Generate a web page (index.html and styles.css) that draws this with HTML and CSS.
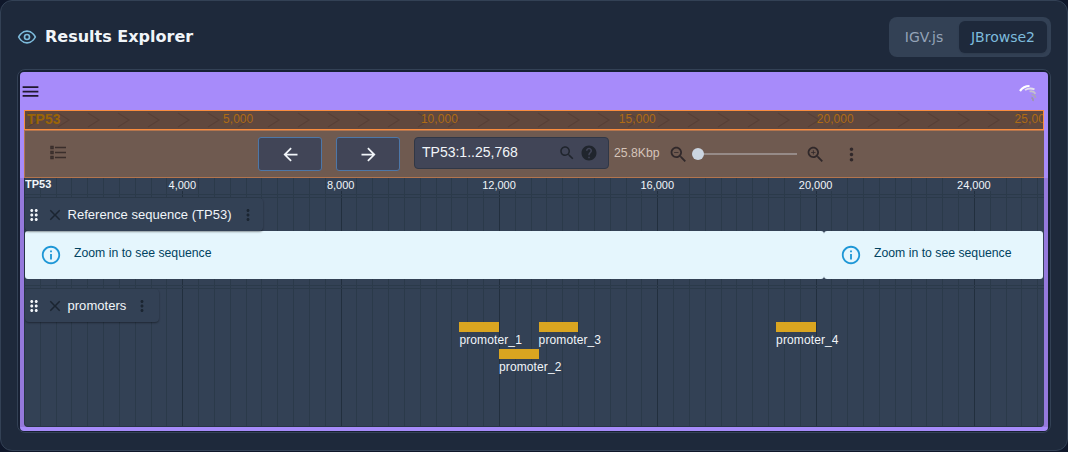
FILE: index.html
```html
<!DOCTYPE html>
<html lang="en">
<head>
    <meta charset="UTF-8">
    <meta name="viewport" content="width=device-width, initial-scale=1.0">
    <title>Results Explorer</title>
    <link rel="stylesheet" href="styles.css">
</head>
<body>
    <!-- shared icons -->
    <svg class="defs" width="0" height="0">
        <symbol id="more" viewBox="0 0 24 24"><path d="M12 8c1.1 0 2-.9 2-2s-.9-2-2-2-2 .9-2 2 .9 2 2 2zm0 2c-1.1 0-2 .9-2 2s.9 2 2 2 2-.9 2-2-.9-2-2-2zm0 6c-1.1 0-2 .9-2 2s.9 2 2 2 2-.9 2-2-.9-2-2-2z"/></symbol>
        <symbol id="drag" viewBox="0 0 24 24"><path d="M11 18c0 1.1-.9 2-2 2s-2-.9-2-2 .9-2 2-2 2 .9 2 2zm-2-8c-1.1 0-2 .9-2 2s.9 2 2 2 2-.9 2-2-.9-2-2-2zm0-6c-1.1 0-2 .9-2 2s.9 2 2 2 2-.9 2-2-.9-2-2-2zm6 4c1.1 0 2-.9 2-2s-.9-2-2-2-2 .9-2 2 .9 2 2 2zm0 2c-1.1 0-2 .9-2 2s.9 2 2 2 2-.9 2-2-.9-2-2-2zm0 6c-1.1 0-2 .9-2 2s.9 2 2 2 2-.9 2-2-.9-2-2-2z"/></symbol>
        <symbol id="close" viewBox="0 0 24 24"><path d="M19 6.41L17.59 5 12 10.59 6.41 5 5 6.41 10.59 12 5 17.59 6.41 19 12 13.41 17.59 19 19 17.59 13.41 12z"/></symbol>
        <symbol id="info" viewBox="0 0 24 24"><path d="M11 7h2v2h-2zm0 4h2v6h-2zm1-9C6.48 2 2 6.48 2 12s4.48 10 10 10 10-4.48 10-10S17.52 2 12 2zm0 18c-4.41 0-8-3.59-8-8s3.59-8 8-8 8 3.59 8 8-3.59 8-8 8z"/></symbol>
    </svg>

    <main class="card">
        <header class="card-header">
            <svg class="eye" viewBox="0 0 24 24"><path d="M2 12s3.500-7 10-7 10 7 10 7-3.500 7-10 7-10-7-10-7z"/><circle cx="12" cy="12" r="3"/></svg>
            <h1>Results Explorer</h1>
            <div class="tabs">
                <button class="tab">IGV.js</button>
                <button class="tab active">JBrowse2</button>
            </div>
        </header>

        <section class="frame">
            <div class="browser">
                <div class="view-header">
                    <svg class="icon menu" viewBox="0 0 24 24"><path d="M3 18h18v-2H3v2zm0-5h18v-2H3v2zm0-7v2h18V6H3z"/></svg>
                    <svg class="logo" viewBox="0 0 18 18">
                        <path d="M1 7Q4.500 2 10.500 2" stroke="#fff" stroke-width="2.200"/>
                        <path d="M6 6Q10.500 3.400 15.500 5.400" stroke="#e4e0ec" stroke-width="1.900"/>
                        <path d="M10.500 7.500Q14.500 6.500 16.500 9.800" stroke="#c5c0cf" stroke-width="1.800"/>
                        <path d="M12.500 10.500Q16 10.500 16.500 14" stroke="#aba6b6" stroke-width="1.600"/>
                        <path d="M12.500 13.500Q14.500 14.500 14 17" stroke="#9c96a8" stroke-width="1.600"/>
                    </svg>
                </div>

                <div class="overview">
                    <svg class="chevrons" width="1018" height="18">
                        <defs><pattern id="chev" x="2" width="30" height="18" patternUnits="userSpaceOnUse"><path d="M1 2l11 7-11 7"/></pattern></defs>
                        <rect width="1018" height="18" fill="url(#chev)"/>
                    </svg>
                    <b>TP53</b>
                    <span>5,000</span><span>10,000</span><span>15,000</span><span>20,000</span><span>25,000</span>
                </div>

                <div class="toolbar">
                    <svg class="tracks-icon" viewBox="0 0 17 16"><path d="M1 1.500h2v2H1zM1 6.500h2v2H1zM1 11.500h2v2H1zM5 2.500h11M5 7.500h11M5 12.500h11"/></svg>
                    <button class="pan"><svg class="icon" viewBox="0 0 24 24"><path d="M20 11H7.830l5.590-5.590L12 4l-8 8 8 8 1.410-1.410L7.830 13H20v-2z"/></svg></button>
                    <button class="pan"><svg class="icon" viewBox="0 0 24 24"><path d="M12 4l-1.410 1.410L16.170 11H4v2h12.170l-5.580 5.590L12 20l8-8z"/></svg></button>
                    <div class="search">
                        <span>TP53:1..25,768</span>
                        <svg class="icon" viewBox="0 0 24 24"><path d="M15.500 14h-.79l-.28-.27C15.410 12.590 16 11.110 16 9.500 16 5.910 13.090 3 9.500 3S3 5.910 3 9.500 5.910 16 9.500 16c1.610 0 3.090-.59 4.230-1.570l.27.28v.79l5 4.990L20.490 19l-4.990-5zm-6 0C7.010 14 5 11.990 5 9.500S7.010 5 9.500 5 14 7.010 14 9.500 11.990 14 9.500 14z"/></svg>
                        <svg class="icon help" viewBox="0 0 24 24"><path d="M12 2C6.480 2 2 6.480 2 12s4.480 10 10 10 10-4.480 10-10S17.520 2 12 2zm1 17h-2v-2h2v2zm2.070-7.750l-.9.92C13.450 12.900 13 13.500 13 15h-2v-.5c0-1.100.45-2.100 1.170-2.830l1.240-1.260c.37-.36.59-.86.59-1.410 0-1.100-.9-2-2-2s-2 .9-2 2H8c0-2.210 1.790-4 4-4s4 1.790 4 4c0 .88-.36 1.680-.93 2.250z"/></svg>
                    </div>
                    <span class="span-size">25.8Kbp</span>
                    <svg class="icon zoom-out" viewBox="0 0 24 24"><path d="M15.500 14h-.79l-.28-.27C15.410 12.590 16 11.110 16 9.500 16 5.910 13.090 3 9.500 3S3 5.910 3 9.500 5.910 16 9.500 16c1.610 0 3.090-.59 4.230-1.570l.27.28v.79l5 4.990L20.490 19l-4.990-5zm-6 0C7.010 14 5 11.990 5 9.500S7.010 5 9.500 5 14 7.010 14 9.500 11.990 14 9.500 14zM7 9h5v1H7z"/></svg>
                    <div class="slider"><i></i></div>
                    <svg class="icon zoom-in" viewBox="0 0 24 24"><path d="M15.500 14h-.79l-.28-.27C15.410 12.590 16 11.110 16 9.500 16 5.910 13.090 3 9.500 3S3 5.910 3 9.500 5.910 16 9.500 16c1.610 0 3.090-.59 4.230-1.570l.27.28v.79l5 4.990L20.490 19l-4.990-5zm-6 0C7.010 14 5 11.990 5 9.500S7.010 5 9.500 5 14 7.010 14 9.500 11.990 14 9.500 14zm2.500-4h-2v2H9v-2H7V9h2V7h1v2h2v1z"/></svg>
                    <svg class="icon view-more"><use href="#more"/></svg>
                </div>

                <div class="tracks">
                    <div class="ruler">
                        <b>TP53</b>
                        <div><span>4,000</span></div>
                        <div><span>8,000</span></div>
                        <div><span>12,000</span></div>
                        <div><span>16,000</span></div>
                        <div><span>20,000</span></div>
                        <div><span>24,000</span></div>
                    </div>

                    <div class="track reference">
                        <div class="track-label">
                            <svg class="drag"><use href="#drag"/></svg>
                            <svg class="close"><use href="#close"/></svg>
                            <span>Reference sequence (TP53)</span>
                            <svg class="more"><use href="#more"/></svg>
                        </div>
                        <div class="blocks">
                            <div class="notice wide"><svg><use href="#info"/></svg><span>Zoom in to see sequence</span></div>
                            <div class="notice"><svg><use href="#info"/></svg><span>Zoom in to see sequence</span></div>
                        </div>
                    </div>

                    <div class="track promoters">
                        <div class="track-label">
                            <svg class="drag"><use href="#drag"/></svg>
                            <svg class="close"><use href="#close"/></svg>
                            <span>promoters</span>
                            <svg class="more"><use href="#more"/></svg>
                        </div>
                        <div class="feature p1">promoter_1</div>
                        <div class="feature p2">promoter_2</div>
                        <div class="feature p3">promoter_3</div>
                        <div class="feature p4">promoter_4</div>
                    </div>
                </div>
            </div>
        </section>
    </main>
</body>
</html>
```
FILE: styles.css
```css
* {
    box-sizing: border-box;
}

body {
    margin: 0;
    height: 452px;
    overflow: hidden;
    background: #0f172a;
    font-family: "Liberation Sans", Arial, sans-serif;
    color: #f1f5f9;
}

svg {
    display: block;
    flex: none;
    fill: currentColor;
}

.defs {
    position: absolute;
}

button {
    font: inherit;
    border: none;
    padding: 0;
}

.card {
    height: 451px;
    padding: 16px 16px 0;
    background: #1e293b;
    border: 1px solid #334155;
    border-radius: 12px;
}

.card-header {
    display: flex;
    align-items: center;
    height: 40px;
    font-family: "DejaVu Sans", sans-serif;
}

.eye {
    width: 20px;
    height: 20px;
    fill: none;
    stroke: #7dbbdc;
    stroke-width: 2;
}

h1 {
    margin: 0 auto 2px 8px;
    font-size: 16px;
    font-weight: bold;
}

.tabs {
    display: flex;
    width: 162px;
    height: 40px;
    padding: 4px;
    background: #334155;
    border-radius: 8px;
}

.tab {
    width: 66px;
    height: 32px;
    padding-right: 4px;
    font-size: 14px;
    color: #94a3b8;
    background: none;
    border-radius: 6px;
}

.tab.active {
    width: 88px;
    padding-right: 0;
    color: #7dbbdc;
    background: #1e293b;
    box-shadow: 0 1px 2px rgba(0, 0, 0, 0.1);
}

.frame {
    height: 364px;
    margin-top: 12px;
    padding: 2px;
    border: 1px solid #334155;
    border-radius: 8px;
    background: #172033;
}

.browser {
    height: 359px;
    width: 1028px;
    padding: 0 4px;
    background: linear-gradient(#a78bfa 106px, #9579dc 106px, #9579dc 355px, #a78bfa 355px);
    border-radius: 4px;
}

.icon {
    width: 21px;
    height: 21px;
}

.view-header {
    display: flex;
    justify-content: space-between;
    align-items: center;
    height: 38px;
    margin: 0 7px 0 -4px;
    color: #21182f;
}

.logo {
    width: 18px;
    height: 18px;
    margin-top: 4px;
    fill: none;
}

/* overview scale */
.overview {
    position: relative;
    display: flex;
    height: 20px;
    overflow: hidden;
    border: 1px solid #f98c3e;
    background: #60483e;
    font-size: 12px;
    letter-spacing: 0.06px;
    line-height: 17px;
    color: #ae6b15;
}

.chevrons {
    position: absolute;
    top: 0;
    left: 0;
}

.chevrons path {
    fill: none;
    stroke: #573f36;
    stroke-width: 1.4;
}

.overview b {
    width: 198px;
    flex: none;
    padding-left: 2px;
    font-size: 14px;
    letter-spacing: 0;
    color: #9a6406;
    z-index: 1;
}

.overview span {
    width: 197.9px;
    flex: none;
    z-index: 1;
}

/* navigation */
.toolbar {
    display: flex;
    align-items: center;
    height: 48px;
    border: 1px solid #b3754e;
    border-right: none;
    background: #6f5a50;
    color: #30282a;
}

.tracks-icon {
    width: 17px;
    height: 16px;
    margin: -2px 191px 0 25px;
    fill: none;
    stroke: #3a2e2b;
    stroke-width: 1.5;
}

.pan {
    display: flex;
    align-items: center;
    justify-content: center;
    width: 64px;
    height: 34px;
    margin-right: 14px;
    background: #414557;
    border: 1px solid #4d77a8;
    border-radius: 3px;
    color: #f1f5f9;
}

.search {
    display: flex;
    align-items: center;
    width: 195px;
    height: 32px;
    margin-top: -2px;
    padding: 0 10px 0 7px;
    background: #414557;
    border: 1px solid #303746;
    border-radius: 4px;
    font-size: 14px;
    color: #20252d;
}

.search span {
    margin-right: auto;
    margin-bottom: 2px;
    color: #f1f5f9;
}

.search .icon {
    width: 18px;
    height: 18px;
    margin-right: 4px;
}

.search .help {
    margin-right: 0;
}

.span-size {
    width: 53px;
    margin: -2px 0 0 5px;
    font-size: 12.25px;
    color: #d5c4b9;
}

.zoom-out {
    margin-left: 1px;
}

.slider {
    width: 99px;
    height: 2px;
    margin: 0 8px 0 9px;
    background: #968b88;
}

.slider i {
    display: block;
    width: 12px;
    height: 12px;
    margin: -5px 0 0 -6px;
    border-radius: 50%;
    background: #cbd5e1;
}

.view-more {
    margin-left: 15px;
}

/* tracks, 4,000bp is 158.32px wide */
.tracks {
    height: 249px;
    overflow: hidden;
    border-radius: 0 0 4px 4px;
    border-left: 1px solid #273545;
    border-bottom: 1px solid #273545;
    background:
        repeating-linear-gradient(90deg, transparent 0 157.32px, #222f3e 157.32px 158.32px),
        repeating-linear-gradient(90deg, transparent 0 14.832px, #2b3a4a 14.832px 15.832px),
        #334155;
}

.ruler {
    display: flex;
    height: 17px;
    overflow: hidden;
    border-bottom: 1px solid #2b3a4a;
    font-size: 11px;
    line-height: 14px;
}

.ruler b {
    width: 78.2px;
    flex: none;
    margin-top: -1px;
}

.ruler div {
    width: 158.32px;
    flex: none;
    text-align: center;
}

.ruler span {
    display: inline-block;
    height: 13px;
    background: #334155;
}

.track {
    margin-top: 2px;
    border-top: 1px solid #2b3a4a;
}

.reference {
    height: 89px;
    border-bottom: 1px solid #2b3a4a;
}

.promoters {
    position: relative;
    height: 140px;
}

.track-label {
    position: relative;
    z-index: 1;
    display: flex;
    align-items: center;
    width: 238px;
    height: 33px;
    background: #334155;
    border-radius: 4px;
    box-shadow: 0 1px 2px rgba(0, 0, 0, 0.4);
    font-size: 13px;
    letter-spacing: 0.03px;
}

.promoters .track-label {
    width: 134px;
}

.track-label svg {
    width: 18px;
    height: 18px;
    color: #1b2531;
}

.track-label span {
    margin-bottom: 1px;
}

.track-label .drag {
    margin-left: -0.5px;
    margin-right: 3px;
    color: #f1f5f9;
}

.track-label .close {
    margin-right: 4px;
}

.track-label .more {
    margin-left: 7px;
}

.blocks {
    display: flex;
    width: 1018px;
}

.notice {
    display: flex;
    align-items: center;
    width: 219px;
    height: 48px;
    padding-left: 16px;
    background: #e5f6fd;
    border-radius: 3px;
    font-size: 12.25px;
    color: #014361;
}

.notice.wide {
    width: 799px;
    padding-left: 15px;
}

.notice svg {
    width: 22px;
    height: 22px;
    margin-right: 12px;
    color: #1e97d6;
}

.notice span {
    margin-top: -4px;
}

/* features are placed at their genome coordinates */
.feature {
    position: absolute;
    top: 33px;
    width: 39.6px;
    font-size: 12px;
    letter-spacing: 0.12px;
    line-height: 17px;
}

.feature::before {
    content: "";
    display: block;
    height: 10px;
    background: #daa520;
}

.p1 { left: 434.4px; }
.p2 { left: 474px; top: 60px; }
.p3 { left: 513.6px; }
.p4 { left: 751.1px; }
```
